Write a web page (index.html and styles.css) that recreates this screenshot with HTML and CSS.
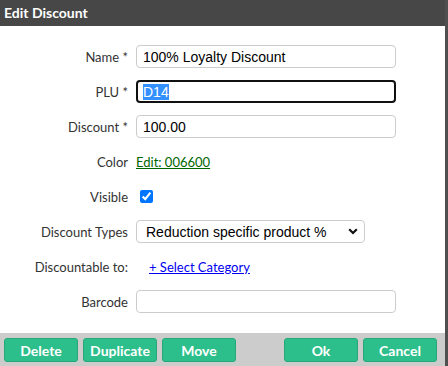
FILE: index.html
```html
<!DOCTYPE html>
<html lang="en">
<head>
    <meta charset="UTF-8">
    <meta name="viewport" content="width=device-width, initial-scale=1.0">
    <title>Edit Discount</title>
    <link rel="stylesheet" href="styles.css">
</head>
<body>
    <div class="dialog">
        <div class="dialog-title">Edit Discount</div>

        <form class="form">
            <label class="label">Name *</label>
            <div class="cell"><input class="field" type="text" value="100% Loyalty Discount"></div>

            <label class="label">PLU *</label>
            <div class="cell"><div class="field focused"><span class="selected">D14</span></div></div>

            <label class="label">Discount *</label>
            <div class="cell"><input class="field" type="text" value="100.00"></div>

            <label class="label">Color</label>
            <div class="cell"><a href="#" class="color-link">Edit: 006600</a></div>

            <label class="label">Visible</label>
            <div class="cell"><input type="checkbox" class="check" checked></div>

            <label class="label">Discount Types</label>
            <div class="cell">
                <div class="select-wrap">
                    <select class="select">
                        <option>Reduction specific product %</option>
                    </select>
                    <svg class="chevron" width="10" height="7" viewBox="0 0 10 7"><path d="M1.2 1.2 L5 5 L8.8 1.2" fill="none" stroke="#111" stroke-width="2.2"/></svg>
                </div>
            </div>

            <label class="label">Discountable to:</label>
            <div class="cell"><a href="#" class="add-link">+ Select Category</a></div>

            <label class="label">Barcode</label>
            <div class="cell"><input class="field" type="text" value=""></div>
        </form>

        <div class="dialog-buttons">
            <div class="btn-group">
                <button class="btn">Delete</button>
                <button class="btn">Duplicate</button>
                <button class="btn">Move</button>
            </div>
            <div class="btn-group">
                <button class="btn">Ok</button>
                <button class="btn">Cancel</button>
            </div>
        </div>
    </div>
</body>
</html>
```

FILE: styles.css
```css
body {
    margin: 0;
    background: #4f4f4f;
    font-family: Lato, "Open Sans", sans-serif;
}
.dialog {
    width: 445px;
    height: 366px;
    background: white;
    display: flex;
    flex-direction: column;
}
.dialog-title {
    height: 26px;
    line-height: 26px;
    padding-left: 4px;
    background: #474747;
    color: white;
    font-weight: bold;
    font-size: 14px;
}
.form {
    display: grid;
    grid-template-columns: 128px 1fr;
    grid-auto-rows: 35px;
    column-gap: 8px;
    padding: 13px 0 14px;
    flex: 1;
}
.label {
    display: flex;
    align-items: center;
    justify-content: flex-end;
    font-size: 13px;
    color: #333;
}
.cell {
    display: flex;
    align-items: center;
}
.field {
    box-sizing: border-box;
    width: 260px;
    height: 23px;
    padding: 0 6px;
    border: 1px solid #ccc;
    border-radius: 4px;
    font-family: "Liberation Sans", Arial, sans-serif;
    font-size: 14px;
    color: #000;
    outline: none;
}
.field.focused {
    display: flex;
    align-items: center;
    border: 2px solid #101010;
    padding-left: 5px;
}
.selected {
    background: #3390ff;
    color: white;
    line-height: 16px;
}
.color-link {
    font-size: 13px;
    color: #006600;
}
.check {
    width: 13px;
    height: 13px;
    margin: 0 0 0 4px;
}
.select-wrap {
    position: relative;
}
.select {
    appearance: none;
    box-sizing: border-box;
    width: 229px;
    height: 23px;
    padding: 0 9px;
    border: 1px solid #ccc;
    border-radius: 4px;
    background: white;
    font-family: "Liberation Sans", Arial, sans-serif;
    font-size: 14px;
    color: #000;
}
.chevron {
    position: absolute;
    right: 7px;
    top: 8px;
    pointer-events: none;
}
.add-link {
    margin-left: 13px;
    font-size: 13px;
    color: #0000ee;
}
.dialog-buttons {
    display: flex;
    justify-content: space-between;
    height: 33px;
    padding: 5px 8px 0 4px;
    box-sizing: border-box;
    background: #cccccc;
}
.btn-group {
    display: flex;
    gap: 5px;
}
.btn {
    width: 74px;
    height: 24px;
    padding: 0;
    background: #2dbf8b;
    border: 1px solid #27a87a;
    border-radius: 3px;
    color: white;
    font-family: Lato, sans-serif;
    font-weight: bold;
    font-size: 14px;
    cursor: pointer;
}
```
